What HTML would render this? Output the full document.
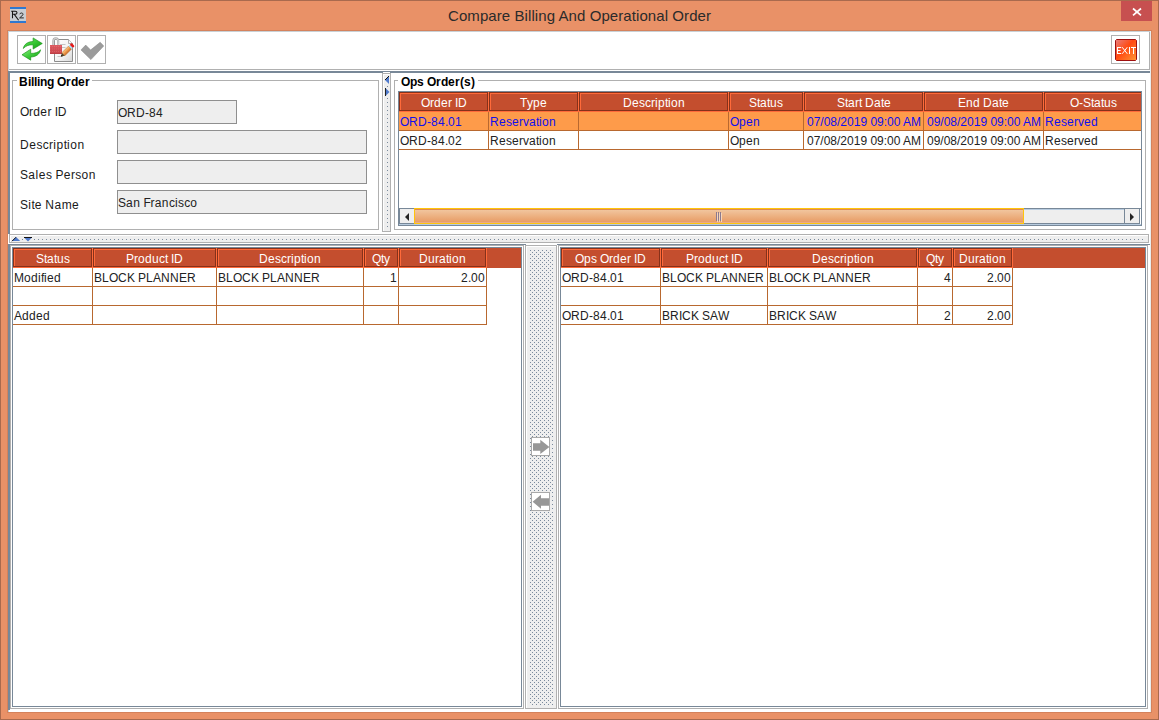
<!DOCTYPE html>
<html><head><meta charset="utf-8"><style>
html,body{margin:0;padding:0;width:1159px;height:720px;overflow:hidden;background:#E99167}
body>div{position:absolute}
.t{position:absolute;white-space:nowrap;font-family:"Liberation Sans",sans-serif}
.t i{display:inline-block;font-style:normal}
svg{position:absolute}
</style></head><body>
<div style="left:0px;top:0px;width:1159px;height:720px;background:#E99167;"></div>
<div style="left:0px;top:0px;width:1px;height:720px;background:#A96A4E;"></div>
<div style="left:1158px;top:0px;width:1px;height:720px;background:#A96A4E;"></div>
<div style="left:0px;top:0px;width:1159px;height:1px;background:#A96A4E;"></div>
<div style="left:0px;top:719px;width:1159px;height:1px;background:#A96A4E;"></div>
<div class="t " style="left:448px;top:7px;font-size:15px;line-height:17px;color:#2b2b2b;font-weight:normal;letter-spacing:0.08px">Compare Billing And Operational Order</div>
<svg style="left:10px;top:7px" width="16" height="16" viewBox="0 0 16 16"><rect x="0" y="0" width="16" height="16" fill="#C9CDD2"/><rect x="0" y="0" width="16" height="2" fill="#2F78D0"/><rect x="0" y="14" width="16" height="2" fill="#2F78D0"/><path d="M2.5 4V11.3M1.2 4.3H5.2C6.4 4.3 7 5 7 5.8C7 6.7 6.3 7.3 5.2 7.3H2.5M4.3 7.4L8.6 13.2" fill="none" stroke="#151515" stroke-width="1.05"/><path d="M9.8 7.2C10 6.4 10.6 6 11.4 6C12.4 6 13 6.6 13 7.3C13 8.3 11.2 9.4 9.6 10.9H13.8" fill="none" stroke="#262626" stroke-width="1"/></svg>
<div style="left:1121px;top:1px;width:31px;height:20px;background:#C75050;"></div>
<svg style="position:absolute;left:1132px;top:7px" width="10" height="10" viewBox="0 0 10 10"><path d="M1 1.5L9 8.3M9 1.5L1 8.3" stroke="#fff" stroke-width="1.7"/></svg>
<div style="left:7px;top:30px;width:1145px;height:683px;background:#D4825C;"></div>
<div style="left:8px;top:31px;width:1143px;height:681px;background:#fff;"></div>
<div style="left:8px;top:31px;width:1px;height:681px;background:#C9D1D6;"></div>
<div style="left:8px;top:31px;width:1143px;height:1px;background:#C9D1D6;"></div>
<div style="left:1150px;top:31px;width:1px;height:681px;background:#E8ECEE;"></div>
<div style="left:1149px;top:32px;width:1px;height:38px;background:#B0B0B0;"></div>
<div style="left:9px;top:69px;width:1141px;height:1px;background:#B0B0B0;"></div>
<div style="left:17px;top:35px;width:29px;height:29px;background:#fff;"></div>
<div style="left:17px;top:35px;width:29px;height:1px;background:#B0B0B0;"></div>
<div style="left:17px;top:63px;width:29px;height:1px;background:#B0B0B0;"></div>
<div style="left:17px;top:35px;width:1px;height:29px;background:#B0B0B0;"></div>
<div style="left:45px;top:35px;width:1px;height:29px;background:#B0B0B0;"></div>
<div style="left:47px;top:35px;width:29px;height:29px;background:#fff;"></div>
<div style="left:47px;top:35px;width:29px;height:1px;background:#B0B0B0;"></div>
<div style="left:47px;top:63px;width:29px;height:1px;background:#B0B0B0;"></div>
<div style="left:47px;top:35px;width:1px;height:29px;background:#B0B0B0;"></div>
<div style="left:75px;top:35px;width:1px;height:29px;background:#B0B0B0;"></div>
<div style="left:77px;top:35px;width:29px;height:29px;background:#fff;"></div>
<div style="left:77px;top:35px;width:29px;height:1px;background:#B0B0B0;"></div>
<div style="left:77px;top:63px;width:29px;height:1px;background:#B0B0B0;"></div>
<div style="left:77px;top:35px;width:1px;height:29px;background:#B0B0B0;"></div>
<div style="left:105px;top:35px;width:1px;height:29px;background:#B0B0B0;"></div>
<div style="left:1111px;top:35px;width:29px;height:29px;background:#fff;"></div>
<div style="left:1111px;top:35px;width:29px;height:1px;background:#B0B0B0;"></div>
<div style="left:1111px;top:63px;width:29px;height:1px;background:#B0B0B0;"></div>
<div style="left:1111px;top:35px;width:1px;height:29px;background:#B0B0B0;"></div>
<div style="left:1139px;top:35px;width:1px;height:29px;background:#B0B0B0;"></div>
<div style="left:8px;top:71px;width:1142px;height:2px;background:#788898;"></div>
<div style="left:8px;top:71px;width:2px;height:163px;background:#788898;"></div>
<div style="left:12px;top:80px;width:367px;height:1px;background:#B0B0B0;"></div>
<div style="left:12px;top:229px;width:367px;height:1px;background:#B0B0B0;"></div>
<div style="left:12px;top:80px;width:1px;height:150px;background:#B0B0B0;"></div>
<div style="left:378px;top:80px;width:1px;height:150px;background:#B0B0B0;"></div>
<div style="left:17px;top:76px;width:75px;height:9px;background:#fff;"></div>
<div class="t " style="left:19px;top:75px;font-size:12px;line-height:14px;color:#000;font-weight:bold;"><i style="width:9px">B</i><i style="width:3px">i</i><i style="width:3px">l</i><i style="width:3px">l</i><i style="width:3px">i</i><i style="width:7px">n</i><i style="width:7px">g</i><i style="width:3px">&nbsp;</i><i style="width:9px">O</i><i style="width:5px">r</i><i style="width:7px">d</i><i style="width:7px">e</i><i style="width:5px">r</i></div>
<div class="t " style="left:20px;top:105px;font-size:12px;line-height:14px;color:#000;font-weight:normal;color:#1a1a1a"><i style="width:9.12px">O</i><i style="width:4.12px">r</i><i style="width:7.12px">d</i><i style="width:7.12px">e</i><i style="width:4.12px">r</i><i style="width:3.12px">&nbsp;</i><i style="width:3.12px">I</i><i style="width:9.12px">D</i></div>
<div class="t " style="left:20px;top:138px;font-size:12px;line-height:14px;color:#000;font-weight:normal;color:#1a1a1a"><i style="width:9.26px">D</i><i style="width:7.26px">e</i><i style="width:6.26px">s</i><i style="width:6.26px">c</i><i style="width:4.26px">r</i><i style="width:3.26px">i</i><i style="width:7.26px">p</i><i style="width:3.26px">t</i><i style="width:3.26px">i</i><i style="width:7.26px">o</i><i style="width:7.26px">n</i></div>
<div class="t " style="left:20px;top:168px;font-size:12px;line-height:14px;color:#000;font-weight:normal;color:#1a1a1a"><i style="width:8.26px">S</i><i style="width:7.26px">a</i><i style="width:3.26px">l</i><i style="width:7.26px">e</i><i style="width:6.26px">s</i><i style="width:3.26px">&nbsp;</i><i style="width:8.26px">P</i><i style="width:7.26px">e</i><i style="width:4.26px">r</i><i style="width:6.26px">s</i><i style="width:7.26px">o</i><i style="width:7.26px">n</i></div>
<div class="t " style="left:20px;top:198px;font-size:12px;line-height:14px;color:#000;font-weight:normal;color:#1a1a1a"><i style="width:8.26px">S</i><i style="width:3.26px">i</i><i style="width:3.26px">t</i><i style="width:7.26px">e</i><i style="width:3.26px">&nbsp;</i><i style="width:9.26px">N</i><i style="width:7.26px">a</i><i style="width:10.26px">m</i><i style="width:7.26px">e</i></div>
<div style="left:117px;top:100px;width:120px;height:24px;background:#EEEEEE;"></div>
<div style="left:117px;top:100px;width:120px;height:1px;background:#8F8F8F;"></div>
<div style="left:117px;top:123px;width:120px;height:1px;background:#8F8F8F;"></div>
<div style="left:117px;top:100px;width:1px;height:24px;background:#8F8F8F;"></div>
<div style="left:236px;top:100px;width:1px;height:24px;background:#8F8F8F;"></div>
<div style="left:117px;top:130px;width:250px;height:24px;background:#EEEEEE;"></div>
<div style="left:117px;top:130px;width:250px;height:1px;background:#8F8F8F;"></div>
<div style="left:117px;top:153px;width:250px;height:1px;background:#8F8F8F;"></div>
<div style="left:117px;top:130px;width:1px;height:24px;background:#8F8F8F;"></div>
<div style="left:366px;top:130px;width:1px;height:24px;background:#8F8F8F;"></div>
<div style="left:117px;top:160px;width:250px;height:24px;background:#EEEEEE;"></div>
<div style="left:117px;top:160px;width:250px;height:1px;background:#8F8F8F;"></div>
<div style="left:117px;top:183px;width:250px;height:1px;background:#8F8F8F;"></div>
<div style="left:117px;top:160px;width:1px;height:24px;background:#8F8F8F;"></div>
<div style="left:366px;top:160px;width:1px;height:24px;background:#8F8F8F;"></div>
<div style="left:117px;top:190px;width:250px;height:24px;background:#EEEEEE;"></div>
<div style="left:117px;top:190px;width:250px;height:1px;background:#8F8F8F;"></div>
<div style="left:117px;top:213px;width:250px;height:1px;background:#8F8F8F;"></div>
<div style="left:117px;top:190px;width:1px;height:24px;background:#8F8F8F;"></div>
<div style="left:366px;top:190px;width:1px;height:24px;background:#8F8F8F;"></div>
<div class="t " style="left:118px;top:106px;font-size:12px;line-height:14px;color:#222;font-weight:normal;"><i style="width:9px">O</i><i style="width:9px">R</i><i style="width:9px">D</i><i style="width:4px">-</i><i style="width:7px">8</i><i style="width:7px">4</i></div>
<div class="t " style="left:118px;top:196px;font-size:12px;line-height:14px;color:#222;font-weight:normal;"><i style="width:8.12px">S</i><i style="width:7.12px">a</i><i style="width:7.12px">n</i><i style="width:3.12px">&nbsp;</i><i style="width:7.12px">F</i><i style="width:4.12px">r</i><i style="width:7.12px">a</i><i style="width:7.12px">n</i><i style="width:6.12px">c</i><i style="width:3.12px">i</i><i style="width:6.12px">s</i><i style="width:6.12px">c</i><i style="width:7.12px">o</i></div>
<div style="left:382px;top:73px;width:9px;height:159px;background:#EEEEEE;"></div>
<div style="left:382px;top:73px;width:9px;height:1px;background:#B0B0B0;"></div>
<div style="left:382px;top:231px;width:9px;height:1px;background:#B0B0B0;"></div>
<div style="left:382px;top:73px;width:1px;height:159px;background:#B0B0B0;"></div>
<div style="left:390px;top:73px;width:1px;height:159px;background:#B0B0B0;"></div>
<div style="left:383px;top:74px;width:7px;height:1px;background:#fff;"></div>
<div style="left:383px;top:74px;width:1px;height:157px;background:#fff;"></div>
<div style="left:383px;top:72px;width:7px;height:1px;background:#fff;"></div>
<div style="left:387px;top:86px;width:1px;height:1px;background:#7A8A9C;"></div>
<div style="left:387px;top:98px;width:1px;height:1px;background:#7A8A9C;"></div>
<div style="left:387px;top:102px;width:1px;height:1px;background:#7A8A9C;"></div>
<div style="left:387px;top:106px;width:1px;height:1px;background:#7A8A9C;"></div>
<div style="left:387px;top:110px;width:1px;height:1px;background:#7A8A9C;"></div>
<div style="left:387px;top:114px;width:1px;height:1px;background:#7A8A9C;"></div>
<div style="left:387px;top:118px;width:1px;height:1px;background:#7A8A9C;"></div>
<div style="left:387px;top:122px;width:1px;height:1px;background:#7A8A9C;"></div>
<div style="left:387px;top:126px;width:1px;height:1px;background:#7A8A9C;"></div>
<div style="left:387px;top:130px;width:1px;height:1px;background:#7A8A9C;"></div>
<div style="left:387px;top:134px;width:1px;height:1px;background:#7A8A9C;"></div>
<div style="left:387px;top:138px;width:1px;height:1px;background:#7A8A9C;"></div>
<div style="left:387px;top:142px;width:1px;height:1px;background:#7A8A9C;"></div>
<div style="left:387px;top:146px;width:1px;height:1px;background:#7A8A9C;"></div>
<div style="left:387px;top:150px;width:1px;height:1px;background:#7A8A9C;"></div>
<div style="left:387px;top:154px;width:1px;height:1px;background:#7A8A9C;"></div>
<div style="left:387px;top:158px;width:1px;height:1px;background:#7A8A9C;"></div>
<div style="left:387px;top:162px;width:1px;height:1px;background:#7A8A9C;"></div>
<div style="left:387px;top:166px;width:1px;height:1px;background:#7A8A9C;"></div>
<div style="left:387px;top:170px;width:1px;height:1px;background:#7A8A9C;"></div>
<div style="left:387px;top:174px;width:1px;height:1px;background:#7A8A9C;"></div>
<div style="left:387px;top:178px;width:1px;height:1px;background:#7A8A9C;"></div>
<div style="left:387px;top:182px;width:1px;height:1px;background:#7A8A9C;"></div>
<div style="left:387px;top:186px;width:1px;height:1px;background:#7A8A9C;"></div>
<div style="left:387px;top:190px;width:1px;height:1px;background:#7A8A9C;"></div>
<div style="left:387px;top:194px;width:1px;height:1px;background:#7A8A9C;"></div>
<div style="left:387px;top:198px;width:1px;height:1px;background:#7A8A9C;"></div>
<div style="left:387px;top:202px;width:1px;height:1px;background:#7A8A9C;"></div>
<div style="left:387px;top:206px;width:1px;height:1px;background:#7A8A9C;"></div>
<div style="left:387px;top:210px;width:1px;height:1px;background:#7A8A9C;"></div>
<div style="left:387px;top:214px;width:1px;height:1px;background:#7A8A9C;"></div>
<div style="left:387px;top:218px;width:1px;height:1px;background:#7A8A9C;"></div>
<div style="left:387px;top:222px;width:1px;height:1px;background:#7A8A9C;"></div>
<div style="left:387px;top:226px;width:1px;height:1px;background:#7A8A9C;"></div>
<svg style="position:absolute;left:384px;top:75px" width="7" height="24"><path d="M5 1L1 5L5 9Z" fill="#4F7ACC"/><path d="M5 1L1 5" stroke="#111" stroke-width="1"/><path d="M1.5 13L5.5 17L1.5 21Z" fill="#4F7ACC"/><path d="M1.5 13L1.5 21" stroke="#222" stroke-width="1"/></svg>
<div style="left:394px;top:80px;width:752px;height:1px;background:#B0B0B0;"></div>
<div style="left:394px;top:229px;width:752px;height:1px;background:#B0B0B0;"></div>
<div style="left:394px;top:80px;width:1px;height:150px;background:#B0B0B0;"></div>
<div style="left:1145px;top:80px;width:1px;height:150px;background:#B0B0B0;"></div>
<div style="left:398px;top:76px;width:80px;height:9px;background:#fff;"></div>
<div class="t " style="left:401px;top:75px;font-size:12px;line-height:14px;color:#000;font-weight:bold;"><i style="width:9px">O</i><i style="width:7px">p</i><i style="width:7px">s</i><i style="width:3px">&nbsp;</i><i style="width:9px">O</i><i style="width:5px">r</i><i style="width:7px">d</i><i style="width:7px">e</i><i style="width:5px">r</i><i style="width:4px">(</i><i style="width:7px">s</i><i style="width:4px">)</i></div>
<div style="left:398px;top:91px;width:744px;height:135px;background:#fff;"></div>
<div style="left:398px;top:91px;width:744px;height:1px;background:#788898;"></div>
<div style="left:398px;top:225px;width:744px;height:1px;background:#788898;"></div>
<div style="left:398px;top:91px;width:1px;height:135px;background:#788898;"></div>
<div style="left:1141px;top:91px;width:1px;height:135px;background:#788898;"></div>
<div style="left:399px;top:92px;width:742px;height:20px;background:#C44E2E;"></div>
<div style="left:488px;top:92px;width:1px;height:20px;background:#FF6A3A;"></div>
<div style="left:399px;top:92px;width:89px;height:1px;background:#86311A;"></div>
<div style="left:399px;top:110px;width:89px;height:1px;background:#86311A;"></div>
<div style="left:399px;top:92px;width:1px;height:19px;background:#86311A;"></div>
<div style="left:487px;top:92px;width:1px;height:19px;background:#86311A;"></div>
<div style="left:400px;top:93px;width:87px;height:1px;background:#FF6A3A;"></div>
<div style="left:400px;top:93px;width:1px;height:17px;background:#FF6A3A;"></div>
<div class="t" style="left:421px;top:96px;font-size:12px;line-height:14px;color:#fff;font-weight:normal;"><i style="width:9px">O</i><i style="width:4px">r</i><i style="width:7px">d</i><i style="width:7px">e</i><i style="width:4px">r</i><i style="width:3px">&nbsp;</i><i style="width:3px">I</i><i style="width:9px">D</i></div>
<div style="left:578px;top:92px;width:1px;height:20px;background:#FF6A3A;"></div>
<div style="left:489px;top:92px;width:89px;height:1px;background:#86311A;"></div>
<div style="left:489px;top:110px;width:89px;height:1px;background:#86311A;"></div>
<div style="left:489px;top:92px;width:1px;height:19px;background:#86311A;"></div>
<div style="left:577px;top:92px;width:1px;height:19px;background:#86311A;"></div>
<div style="left:490px;top:93px;width:87px;height:1px;background:#FF6A3A;"></div>
<div style="left:490px;top:93px;width:1px;height:17px;background:#FF6A3A;"></div>
<div class="t" style="left:520px;top:96px;font-size:12px;line-height:14px;color:#fff;font-weight:normal;"><i style="width:7px">T</i><i style="width:6px">y</i><i style="width:7px">p</i><i style="width:7px">e</i></div>
<div style="left:728px;top:92px;width:1px;height:20px;background:#FF6A3A;"></div>
<div style="left:579px;top:92px;width:149px;height:1px;background:#86311A;"></div>
<div style="left:579px;top:110px;width:149px;height:1px;background:#86311A;"></div>
<div style="left:579px;top:92px;width:1px;height:19px;background:#86311A;"></div>
<div style="left:727px;top:92px;width:1px;height:19px;background:#86311A;"></div>
<div style="left:580px;top:93px;width:147px;height:1px;background:#FF6A3A;"></div>
<div style="left:580px;top:93px;width:1px;height:17px;background:#FF6A3A;"></div>
<div class="t" style="left:623px;top:96px;font-size:12px;line-height:14px;color:#fff;font-weight:normal;"><i style="width:9px">D</i><i style="width:7px">e</i><i style="width:6px">s</i><i style="width:6px">c</i><i style="width:4px">r</i><i style="width:3px">i</i><i style="width:7px">p</i><i style="width:3px">t</i><i style="width:3px">i</i><i style="width:7px">o</i><i style="width:7px">n</i></div>
<div style="left:803px;top:92px;width:1px;height:20px;background:#FF6A3A;"></div>
<div style="left:729px;top:92px;width:74px;height:1px;background:#86311A;"></div>
<div style="left:729px;top:110px;width:74px;height:1px;background:#86311A;"></div>
<div style="left:729px;top:92px;width:1px;height:19px;background:#86311A;"></div>
<div style="left:802px;top:92px;width:1px;height:19px;background:#86311A;"></div>
<div style="left:730px;top:93px;width:72px;height:1px;background:#FF6A3A;"></div>
<div style="left:730px;top:93px;width:1px;height:17px;background:#FF6A3A;"></div>
<div class="t" style="left:749px;top:96px;font-size:12px;line-height:14px;color:#fff;font-weight:normal;"><i style="width:8px">S</i><i style="width:3px">t</i><i style="width:7px">a</i><i style="width:3px">t</i><i style="width:7px">u</i><i style="width:6px">s</i></div>
<div style="left:923px;top:92px;width:1px;height:20px;background:#FF6A3A;"></div>
<div style="left:804px;top:92px;width:119px;height:1px;background:#86311A;"></div>
<div style="left:804px;top:110px;width:119px;height:1px;background:#86311A;"></div>
<div style="left:804px;top:92px;width:1px;height:19px;background:#86311A;"></div>
<div style="left:922px;top:92px;width:1px;height:19px;background:#86311A;"></div>
<div style="left:805px;top:93px;width:117px;height:1px;background:#FF6A3A;"></div>
<div style="left:805px;top:93px;width:1px;height:17px;background:#FF6A3A;"></div>
<div class="t" style="left:837px;top:96px;font-size:12px;line-height:14px;color:#fff;font-weight:normal;"><i style="width:8px">S</i><i style="width:3px">t</i><i style="width:7px">a</i><i style="width:4px">r</i><i style="width:3px">t</i><i style="width:3px">&nbsp;</i><i style="width:9px">D</i><i style="width:7px">a</i><i style="width:3px">t</i><i style="width:7px">e</i></div>
<div style="left:1043px;top:92px;width:1px;height:20px;background:#FF6A3A;"></div>
<div style="left:924px;top:92px;width:119px;height:1px;background:#86311A;"></div>
<div style="left:924px;top:110px;width:119px;height:1px;background:#86311A;"></div>
<div style="left:924px;top:92px;width:1px;height:19px;background:#86311A;"></div>
<div style="left:1042px;top:92px;width:1px;height:19px;background:#86311A;"></div>
<div style="left:925px;top:93px;width:117px;height:1px;background:#FF6A3A;"></div>
<div style="left:925px;top:93px;width:1px;height:17px;background:#FF6A3A;"></div>
<div class="t" style="left:958px;top:96px;font-size:12px;line-height:14px;color:#fff;font-weight:normal;"><i style="width:8px">E</i><i style="width:7px">n</i><i style="width:7px">d</i><i style="width:3px">&nbsp;</i><i style="width:9px">D</i><i style="width:7px">a</i><i style="width:3px">t</i><i style="width:7px">e</i></div>
<div style="left:399px;top:111px;width:645px;height:1px;background:#FF6A3A;"></div>
<div style="left:1044px;top:92px;width:97px;height:20px;background:#C44E2E;"></div>
<div style="left:1044px;top:92px;width:97px;height:1px;background:#86311A;"></div>
<div style="left:1044px;top:110px;width:97px;height:1px;background:#86311A;"></div>
<div style="left:1044px;top:92px;width:1px;height:19px;background:#86311A;"></div>
<div style="left:1045px;top:93px;width:96px;height:1px;background:#FF6A3A;"></div>
<div style="left:1045px;top:93px;width:1px;height:17px;background:#FF6A3A;"></div>
<div style="left:1044px;top:111px;width:97px;height:1px;background:#FF6A3A;"></div>
<div class="t" style="left:1070px;top:96px;font-size:12px;line-height:14px;color:#fff;font-weight:normal;"><i style="width:9px">O</i><i style="width:4px">-</i><i style="width:8px">S</i><i style="width:3px">t</i><i style="width:7px">a</i><i style="width:3px">t</i><i style="width:7px">u</i><i style="width:6px">s</i></div>
<div style="left:399px;top:112px;width:742px;height:18px;background:#FE9B4A;"></div>
<div style="left:399px;top:130px;width:742px;height:1px;background:#B8682F;"></div>
<div style="left:399px;top:149px;width:742px;height:1px;background:#B8682F;"></div>
<div style="left:488px;top:112px;width:1px;height:38px;background:#B8682F;"></div>
<div style="left:578px;top:112px;width:1px;height:38px;background:#B8682F;"></div>
<div style="left:728px;top:112px;width:1px;height:38px;background:#B8682F;"></div>
<div style="left:803px;top:112px;width:1px;height:38px;background:#B8682F;"></div>
<div style="left:923px;top:112px;width:1px;height:38px;background:#B8682F;"></div>
<div style="left:1043px;top:112px;width:1px;height:38px;background:#B8682F;"></div>
<div class="t " style="left:400px;top:115px;font-size:12px;line-height:14px;color:#1010EE;font-weight:normal;"><i style="width:9px">O</i><i style="width:9px">R</i><i style="width:9px">D</i><i style="width:4px">-</i><i style="width:7px">8</i><i style="width:7px">4</i><i style="width:3px">.</i><i style="width:7px">0</i><i style="width:7px">1</i></div>
<div class="t " style="left:490px;top:115px;font-size:12px;line-height:14px;color:#1010EE;font-weight:normal;"><i style="width:9px">R</i><i style="width:7px">e</i><i style="width:6px">s</i><i style="width:7px">e</i><i style="width:4px">r</i><i style="width:6px">v</i><i style="width:7px">a</i><i style="width:3px">t</i><i style="width:3px">i</i><i style="width:7px">o</i><i style="width:7px">n</i></div>
<div class="t " style="left:730px;top:115px;font-size:12px;line-height:14px;color:#1010EE;font-weight:normal;"><i style="width:9px">O</i><i style="width:7px">p</i><i style="width:7px">e</i><i style="width:7px">n</i></div>
<div class="t " style="left:807px;top:115px;font-size:12px;line-height:14px;color:#1010EE;font-weight:normal;">07/08/2019 09:00 AM</div>
<div class="t " style="left:927px;top:115px;font-size:12px;line-height:14px;color:#1010EE;font-weight:normal;">09/08/2019 09:00 AM</div>
<div class="t " style="left:1045px;top:115px;font-size:12px;line-height:14px;color:#1010EE;font-weight:normal;"><i style="width:9px">R</i><i style="width:7px">e</i><i style="width:6px">s</i><i style="width:7px">e</i><i style="width:4px">r</i><i style="width:6px">v</i><i style="width:7px">e</i><i style="width:7px">d</i></div>
<div class="t " style="left:400px;top:134px;font-size:12px;line-height:14px;color:#222;font-weight:normal;"><i style="width:9px">O</i><i style="width:9px">R</i><i style="width:9px">D</i><i style="width:4px">-</i><i style="width:7px">8</i><i style="width:7px">4</i><i style="width:3px">.</i><i style="width:7px">0</i><i style="width:7px">2</i></div>
<div class="t " style="left:490px;top:134px;font-size:12px;line-height:14px;color:#222;font-weight:normal;"><i style="width:9px">R</i><i style="width:7px">e</i><i style="width:6px">s</i><i style="width:7px">e</i><i style="width:4px">r</i><i style="width:6px">v</i><i style="width:7px">a</i><i style="width:3px">t</i><i style="width:3px">i</i><i style="width:7px">o</i><i style="width:7px">n</i></div>
<div class="t " style="left:730px;top:134px;font-size:12px;line-height:14px;color:#222;font-weight:normal;"><i style="width:9px">O</i><i style="width:7px">p</i><i style="width:7px">e</i><i style="width:7px">n</i></div>
<div class="t " style="left:807px;top:134px;font-size:12px;line-height:14px;color:#222;font-weight:normal;">07/08/2019 09:00 AM</div>
<div class="t " style="left:927px;top:134px;font-size:12px;line-height:14px;color:#222;font-weight:normal;">09/08/2019 09:00 AM</div>
<div class="t " style="left:1045px;top:134px;font-size:12px;line-height:14px;color:#222;font-weight:normal;"><i style="width:9px">R</i><i style="width:7px">e</i><i style="width:6px">s</i><i style="width:7px">e</i><i style="width:4px">r</i><i style="width:6px">v</i><i style="width:7px">e</i><i style="width:7px">d</i></div>
<div style="left:399px;top:208px;width:742px;height:1px;background:#788898;"></div>
<div style="left:399px;top:224px;width:742px;height:1px;background:#B8CCE0;"></div>
<div style="left:398px;top:225px;width:744px;height:1px;background:#788898;"></div>
<div style="left:399px;top:209px;width:15px;height:14px;background:#EEEEEE;"></div>
<div style="left:399px;top:208px;width:1px;height:16px;background:#788898;"></div>
<div style="left:399px;top:223px;width:15px;height:1px;background:#788898;"></div>
<svg style="position:absolute;left:404px;top:212px" width="6" height="10"><path d="M5 1L1 5L5 9Z" fill="#222"/></svg>
<div style="left:414px;top:208px;width:610px;height:16px;background:#FFC40A;"></div>
<div style="left:415px;top:209px;width:608px;height:1px;background:#E0894F;"></div>
<div style="left:415px;top:210px;width:608px;height:12px;background:linear-gradient(180deg,#F1C59E,#E89D66)"></div>
<div style="left:415px;top:222px;width:608px;height:1px;background:#EBAB86;"></div>
<div style="left:716px;top:212px;width:1px;height:9px;background:#8C7A8E;"></div>
<div style="left:717px;top:213px;width:1px;height:9px;background:#F8D6B8;"></div>
<div style="left:718px;top:212px;width:1px;height:9px;background:#8C7A8E;"></div>
<div style="left:719px;top:213px;width:1px;height:9px;background:#F8D6B8;"></div>
<div style="left:720px;top:212px;width:1px;height:9px;background:#8C7A8E;"></div>
<div style="left:721px;top:213px;width:1px;height:9px;background:#F8D6B8;"></div>
<div style="left:1024px;top:209px;width:100px;height:14px;background:#EEEEEE;"></div>
<div style="left:1024px;top:209px;width:100px;height:1px;background:#B8CCE0;"></div>
<div style="left:1024px;top:223px;width:100px;height:1px;background:#788898;"></div>
<div style="left:1124px;top:209px;width:16px;height:14px;background:#EEEEEE;"></div>
<div style="left:1124px;top:209px;width:1px;height:15px;background:#788898;"></div>
<div style="left:1124px;top:223px;width:16px;height:1px;background:#788898;"></div>
<div style="left:1139px;top:209px;width:1px;height:15px;background:#788898;"></div>
<svg style="position:absolute;left:1129px;top:212px" width="6" height="10"><path d="M1 1L5 5L1 9Z" fill="#222"/></svg>
<div style="left:9px;top:234px;width:1140px;height:9px;background:#EEEEEE;"></div>
<div style="left:9px;top:234px;width:1140px;height:1px;background:#B0B0B0;"></div>
<div style="left:9px;top:242px;width:1140px;height:1px;background:#B0B0B0;"></div>
<div style="left:9px;top:234px;width:1px;height:9px;background:#B0B0B0;"></div>
<div style="left:1148px;top:234px;width:1px;height:9px;background:#B0B0B0;"></div>
<div style="left:10px;top:235px;width:1138px;height:1px;background:#fff;"></div>
<div style="left:10px;top:235px;width:1px;height:7px;background:#fff;"></div>
<div style="left:34px;top:239px;width:1px;height:1px;background:#7A8A9C;"></div>
<div style="left:38px;top:239px;width:1px;height:1px;background:#7A8A9C;"></div>
<div style="left:42px;top:239px;width:1px;height:1px;background:#7A8A9C;"></div>
<div style="left:46px;top:239px;width:1px;height:1px;background:#7A8A9C;"></div>
<div style="left:50px;top:239px;width:1px;height:1px;background:#7A8A9C;"></div>
<div style="left:54px;top:239px;width:1px;height:1px;background:#7A8A9C;"></div>
<div style="left:58px;top:239px;width:1px;height:1px;background:#7A8A9C;"></div>
<div style="left:62px;top:239px;width:1px;height:1px;background:#7A8A9C;"></div>
<div style="left:66px;top:239px;width:1px;height:1px;background:#7A8A9C;"></div>
<div style="left:70px;top:239px;width:1px;height:1px;background:#7A8A9C;"></div>
<div style="left:74px;top:239px;width:1px;height:1px;background:#7A8A9C;"></div>
<div style="left:78px;top:239px;width:1px;height:1px;background:#7A8A9C;"></div>
<div style="left:82px;top:239px;width:1px;height:1px;background:#7A8A9C;"></div>
<div style="left:86px;top:239px;width:1px;height:1px;background:#7A8A9C;"></div>
<div style="left:90px;top:239px;width:1px;height:1px;background:#7A8A9C;"></div>
<div style="left:94px;top:239px;width:1px;height:1px;background:#7A8A9C;"></div>
<div style="left:98px;top:239px;width:1px;height:1px;background:#7A8A9C;"></div>
<div style="left:102px;top:239px;width:1px;height:1px;background:#7A8A9C;"></div>
<div style="left:106px;top:239px;width:1px;height:1px;background:#7A8A9C;"></div>
<div style="left:110px;top:239px;width:1px;height:1px;background:#7A8A9C;"></div>
<div style="left:114px;top:239px;width:1px;height:1px;background:#7A8A9C;"></div>
<div style="left:118px;top:239px;width:1px;height:1px;background:#7A8A9C;"></div>
<div style="left:122px;top:239px;width:1px;height:1px;background:#7A8A9C;"></div>
<div style="left:126px;top:239px;width:1px;height:1px;background:#7A8A9C;"></div>
<div style="left:130px;top:239px;width:1px;height:1px;background:#7A8A9C;"></div>
<div style="left:134px;top:239px;width:1px;height:1px;background:#7A8A9C;"></div>
<div style="left:138px;top:239px;width:1px;height:1px;background:#7A8A9C;"></div>
<div style="left:142px;top:239px;width:1px;height:1px;background:#7A8A9C;"></div>
<div style="left:146px;top:239px;width:1px;height:1px;background:#7A8A9C;"></div>
<div style="left:150px;top:239px;width:1px;height:1px;background:#7A8A9C;"></div>
<div style="left:154px;top:239px;width:1px;height:1px;background:#7A8A9C;"></div>
<div style="left:158px;top:239px;width:1px;height:1px;background:#7A8A9C;"></div>
<div style="left:162px;top:239px;width:1px;height:1px;background:#7A8A9C;"></div>
<div style="left:166px;top:239px;width:1px;height:1px;background:#7A8A9C;"></div>
<div style="left:170px;top:239px;width:1px;height:1px;background:#7A8A9C;"></div>
<div style="left:174px;top:239px;width:1px;height:1px;background:#7A8A9C;"></div>
<div style="left:178px;top:239px;width:1px;height:1px;background:#7A8A9C;"></div>
<div style="left:182px;top:239px;width:1px;height:1px;background:#7A8A9C;"></div>
<div style="left:186px;top:239px;width:1px;height:1px;background:#7A8A9C;"></div>
<div style="left:190px;top:239px;width:1px;height:1px;background:#7A8A9C;"></div>
<div style="left:194px;top:239px;width:1px;height:1px;background:#7A8A9C;"></div>
<div style="left:198px;top:239px;width:1px;height:1px;background:#7A8A9C;"></div>
<div style="left:202px;top:239px;width:1px;height:1px;background:#7A8A9C;"></div>
<div style="left:206px;top:239px;width:1px;height:1px;background:#7A8A9C;"></div>
<div style="left:210px;top:239px;width:1px;height:1px;background:#7A8A9C;"></div>
<div style="left:214px;top:239px;width:1px;height:1px;background:#7A8A9C;"></div>
<div style="left:218px;top:239px;width:1px;height:1px;background:#7A8A9C;"></div>
<div style="left:222px;top:239px;width:1px;height:1px;background:#7A8A9C;"></div>
<div style="left:226px;top:239px;width:1px;height:1px;background:#7A8A9C;"></div>
<div style="left:230px;top:239px;width:1px;height:1px;background:#7A8A9C;"></div>
<div style="left:234px;top:239px;width:1px;height:1px;background:#7A8A9C;"></div>
<div style="left:238px;top:239px;width:1px;height:1px;background:#7A8A9C;"></div>
<div style="left:242px;top:239px;width:1px;height:1px;background:#7A8A9C;"></div>
<div style="left:246px;top:239px;width:1px;height:1px;background:#7A8A9C;"></div>
<div style="left:250px;top:239px;width:1px;height:1px;background:#7A8A9C;"></div>
<div style="left:254px;top:239px;width:1px;height:1px;background:#7A8A9C;"></div>
<div style="left:258px;top:239px;width:1px;height:1px;background:#7A8A9C;"></div>
<div style="left:262px;top:239px;width:1px;height:1px;background:#7A8A9C;"></div>
<div style="left:266px;top:239px;width:1px;height:1px;background:#7A8A9C;"></div>
<div style="left:270px;top:239px;width:1px;height:1px;background:#7A8A9C;"></div>
<div style="left:274px;top:239px;width:1px;height:1px;background:#7A8A9C;"></div>
<div style="left:278px;top:239px;width:1px;height:1px;background:#7A8A9C;"></div>
<div style="left:282px;top:239px;width:1px;height:1px;background:#7A8A9C;"></div>
<div style="left:286px;top:239px;width:1px;height:1px;background:#7A8A9C;"></div>
<div style="left:290px;top:239px;width:1px;height:1px;background:#7A8A9C;"></div>
<div style="left:294px;top:239px;width:1px;height:1px;background:#7A8A9C;"></div>
<div style="left:298px;top:239px;width:1px;height:1px;background:#7A8A9C;"></div>
<div style="left:302px;top:239px;width:1px;height:1px;background:#7A8A9C;"></div>
<div style="left:306px;top:239px;width:1px;height:1px;background:#7A8A9C;"></div>
<div style="left:310px;top:239px;width:1px;height:1px;background:#7A8A9C;"></div>
<div style="left:314px;top:239px;width:1px;height:1px;background:#7A8A9C;"></div>
<div style="left:318px;top:239px;width:1px;height:1px;background:#7A8A9C;"></div>
<div style="left:322px;top:239px;width:1px;height:1px;background:#7A8A9C;"></div>
<div style="left:326px;top:239px;width:1px;height:1px;background:#7A8A9C;"></div>
<div style="left:330px;top:239px;width:1px;height:1px;background:#7A8A9C;"></div>
<div style="left:334px;top:239px;width:1px;height:1px;background:#7A8A9C;"></div>
<div style="left:338px;top:239px;width:1px;height:1px;background:#7A8A9C;"></div>
<div style="left:342px;top:239px;width:1px;height:1px;background:#7A8A9C;"></div>
<div style="left:346px;top:239px;width:1px;height:1px;background:#7A8A9C;"></div>
<div style="left:350px;top:239px;width:1px;height:1px;background:#7A8A9C;"></div>
<div style="left:354px;top:239px;width:1px;height:1px;background:#7A8A9C;"></div>
<div style="left:358px;top:239px;width:1px;height:1px;background:#7A8A9C;"></div>
<div style="left:362px;top:239px;width:1px;height:1px;background:#7A8A9C;"></div>
<div style="left:366px;top:239px;width:1px;height:1px;background:#7A8A9C;"></div>
<div style="left:370px;top:239px;width:1px;height:1px;background:#7A8A9C;"></div>
<div style="left:374px;top:239px;width:1px;height:1px;background:#7A8A9C;"></div>
<div style="left:378px;top:239px;width:1px;height:1px;background:#7A8A9C;"></div>
<div style="left:382px;top:239px;width:1px;height:1px;background:#7A8A9C;"></div>
<div style="left:386px;top:239px;width:1px;height:1px;background:#7A8A9C;"></div>
<div style="left:390px;top:239px;width:1px;height:1px;background:#7A8A9C;"></div>
<div style="left:394px;top:239px;width:1px;height:1px;background:#7A8A9C;"></div>
<div style="left:398px;top:239px;width:1px;height:1px;background:#7A8A9C;"></div>
<div style="left:402px;top:239px;width:1px;height:1px;background:#7A8A9C;"></div>
<div style="left:406px;top:239px;width:1px;height:1px;background:#7A8A9C;"></div>
<div style="left:410px;top:239px;width:1px;height:1px;background:#7A8A9C;"></div>
<div style="left:414px;top:239px;width:1px;height:1px;background:#7A8A9C;"></div>
<div style="left:418px;top:239px;width:1px;height:1px;background:#7A8A9C;"></div>
<div style="left:422px;top:239px;width:1px;height:1px;background:#7A8A9C;"></div>
<div style="left:426px;top:239px;width:1px;height:1px;background:#7A8A9C;"></div>
<div style="left:430px;top:239px;width:1px;height:1px;background:#7A8A9C;"></div>
<div style="left:434px;top:239px;width:1px;height:1px;background:#7A8A9C;"></div>
<div style="left:438px;top:239px;width:1px;height:1px;background:#7A8A9C;"></div>
<div style="left:442px;top:239px;width:1px;height:1px;background:#7A8A9C;"></div>
<div style="left:446px;top:239px;width:1px;height:1px;background:#7A8A9C;"></div>
<div style="left:450px;top:239px;width:1px;height:1px;background:#7A8A9C;"></div>
<div style="left:454px;top:239px;width:1px;height:1px;background:#7A8A9C;"></div>
<div style="left:458px;top:239px;width:1px;height:1px;background:#7A8A9C;"></div>
<div style="left:462px;top:239px;width:1px;height:1px;background:#7A8A9C;"></div>
<div style="left:466px;top:239px;width:1px;height:1px;background:#7A8A9C;"></div>
<div style="left:470px;top:239px;width:1px;height:1px;background:#7A8A9C;"></div>
<div style="left:474px;top:239px;width:1px;height:1px;background:#7A8A9C;"></div>
<div style="left:478px;top:239px;width:1px;height:1px;background:#7A8A9C;"></div>
<div style="left:482px;top:239px;width:1px;height:1px;background:#7A8A9C;"></div>
<div style="left:486px;top:239px;width:1px;height:1px;background:#7A8A9C;"></div>
<div style="left:490px;top:239px;width:1px;height:1px;background:#7A8A9C;"></div>
<div style="left:494px;top:239px;width:1px;height:1px;background:#7A8A9C;"></div>
<div style="left:498px;top:239px;width:1px;height:1px;background:#7A8A9C;"></div>
<div style="left:502px;top:239px;width:1px;height:1px;background:#7A8A9C;"></div>
<div style="left:506px;top:239px;width:1px;height:1px;background:#7A8A9C;"></div>
<div style="left:510px;top:239px;width:1px;height:1px;background:#7A8A9C;"></div>
<div style="left:514px;top:239px;width:1px;height:1px;background:#7A8A9C;"></div>
<div style="left:518px;top:239px;width:1px;height:1px;background:#7A8A9C;"></div>
<div style="left:522px;top:239px;width:1px;height:1px;background:#7A8A9C;"></div>
<div style="left:526px;top:239px;width:1px;height:1px;background:#7A8A9C;"></div>
<div style="left:530px;top:239px;width:1px;height:1px;background:#7A8A9C;"></div>
<div style="left:534px;top:239px;width:1px;height:1px;background:#7A8A9C;"></div>
<div style="left:538px;top:239px;width:1px;height:1px;background:#7A8A9C;"></div>
<div style="left:542px;top:239px;width:1px;height:1px;background:#7A8A9C;"></div>
<div style="left:546px;top:239px;width:1px;height:1px;background:#7A8A9C;"></div>
<div style="left:550px;top:239px;width:1px;height:1px;background:#7A8A9C;"></div>
<div style="left:554px;top:239px;width:1px;height:1px;background:#7A8A9C;"></div>
<div style="left:558px;top:239px;width:1px;height:1px;background:#7A8A9C;"></div>
<div style="left:562px;top:239px;width:1px;height:1px;background:#7A8A9C;"></div>
<div style="left:566px;top:239px;width:1px;height:1px;background:#7A8A9C;"></div>
<div style="left:570px;top:239px;width:1px;height:1px;background:#7A8A9C;"></div>
<div style="left:574px;top:239px;width:1px;height:1px;background:#7A8A9C;"></div>
<div style="left:578px;top:239px;width:1px;height:1px;background:#7A8A9C;"></div>
<div style="left:582px;top:239px;width:1px;height:1px;background:#7A8A9C;"></div>
<div style="left:586px;top:239px;width:1px;height:1px;background:#7A8A9C;"></div>
<div style="left:590px;top:239px;width:1px;height:1px;background:#7A8A9C;"></div>
<div style="left:594px;top:239px;width:1px;height:1px;background:#7A8A9C;"></div>
<div style="left:598px;top:239px;width:1px;height:1px;background:#7A8A9C;"></div>
<div style="left:602px;top:239px;width:1px;height:1px;background:#7A8A9C;"></div>
<div style="left:606px;top:239px;width:1px;height:1px;background:#7A8A9C;"></div>
<div style="left:610px;top:239px;width:1px;height:1px;background:#7A8A9C;"></div>
<div style="left:614px;top:239px;width:1px;height:1px;background:#7A8A9C;"></div>
<div style="left:618px;top:239px;width:1px;height:1px;background:#7A8A9C;"></div>
<div style="left:622px;top:239px;width:1px;height:1px;background:#7A8A9C;"></div>
<div style="left:626px;top:239px;width:1px;height:1px;background:#7A8A9C;"></div>
<div style="left:630px;top:239px;width:1px;height:1px;background:#7A8A9C;"></div>
<div style="left:634px;top:239px;width:1px;height:1px;background:#7A8A9C;"></div>
<div style="left:638px;top:239px;width:1px;height:1px;background:#7A8A9C;"></div>
<div style="left:642px;top:239px;width:1px;height:1px;background:#7A8A9C;"></div>
<div style="left:646px;top:239px;width:1px;height:1px;background:#7A8A9C;"></div>
<div style="left:650px;top:239px;width:1px;height:1px;background:#7A8A9C;"></div>
<div style="left:654px;top:239px;width:1px;height:1px;background:#7A8A9C;"></div>
<div style="left:658px;top:239px;width:1px;height:1px;background:#7A8A9C;"></div>
<div style="left:662px;top:239px;width:1px;height:1px;background:#7A8A9C;"></div>
<div style="left:666px;top:239px;width:1px;height:1px;background:#7A8A9C;"></div>
<div style="left:670px;top:239px;width:1px;height:1px;background:#7A8A9C;"></div>
<div style="left:674px;top:239px;width:1px;height:1px;background:#7A8A9C;"></div>
<div style="left:678px;top:239px;width:1px;height:1px;background:#7A8A9C;"></div>
<div style="left:682px;top:239px;width:1px;height:1px;background:#7A8A9C;"></div>
<div style="left:686px;top:239px;width:1px;height:1px;background:#7A8A9C;"></div>
<div style="left:690px;top:239px;width:1px;height:1px;background:#7A8A9C;"></div>
<div style="left:694px;top:239px;width:1px;height:1px;background:#7A8A9C;"></div>
<div style="left:698px;top:239px;width:1px;height:1px;background:#7A8A9C;"></div>
<div style="left:702px;top:239px;width:1px;height:1px;background:#7A8A9C;"></div>
<div style="left:706px;top:239px;width:1px;height:1px;background:#7A8A9C;"></div>
<div style="left:710px;top:239px;width:1px;height:1px;background:#7A8A9C;"></div>
<div style="left:714px;top:239px;width:1px;height:1px;background:#7A8A9C;"></div>
<div style="left:718px;top:239px;width:1px;height:1px;background:#7A8A9C;"></div>
<div style="left:722px;top:239px;width:1px;height:1px;background:#7A8A9C;"></div>
<div style="left:726px;top:239px;width:1px;height:1px;background:#7A8A9C;"></div>
<div style="left:730px;top:239px;width:1px;height:1px;background:#7A8A9C;"></div>
<div style="left:734px;top:239px;width:1px;height:1px;background:#7A8A9C;"></div>
<div style="left:738px;top:239px;width:1px;height:1px;background:#7A8A9C;"></div>
<div style="left:742px;top:239px;width:1px;height:1px;background:#7A8A9C;"></div>
<div style="left:746px;top:239px;width:1px;height:1px;background:#7A8A9C;"></div>
<div style="left:750px;top:239px;width:1px;height:1px;background:#7A8A9C;"></div>
<div style="left:754px;top:239px;width:1px;height:1px;background:#7A8A9C;"></div>
<div style="left:758px;top:239px;width:1px;height:1px;background:#7A8A9C;"></div>
<div style="left:762px;top:239px;width:1px;height:1px;background:#7A8A9C;"></div>
<div style="left:766px;top:239px;width:1px;height:1px;background:#7A8A9C;"></div>
<div style="left:770px;top:239px;width:1px;height:1px;background:#7A8A9C;"></div>
<div style="left:774px;top:239px;width:1px;height:1px;background:#7A8A9C;"></div>
<div style="left:778px;top:239px;width:1px;height:1px;background:#7A8A9C;"></div>
<div style="left:782px;top:239px;width:1px;height:1px;background:#7A8A9C;"></div>
<div style="left:786px;top:239px;width:1px;height:1px;background:#7A8A9C;"></div>
<div style="left:790px;top:239px;width:1px;height:1px;background:#7A8A9C;"></div>
<div style="left:794px;top:239px;width:1px;height:1px;background:#7A8A9C;"></div>
<div style="left:798px;top:239px;width:1px;height:1px;background:#7A8A9C;"></div>
<div style="left:802px;top:239px;width:1px;height:1px;background:#7A8A9C;"></div>
<div style="left:806px;top:239px;width:1px;height:1px;background:#7A8A9C;"></div>
<div style="left:810px;top:239px;width:1px;height:1px;background:#7A8A9C;"></div>
<div style="left:814px;top:239px;width:1px;height:1px;background:#7A8A9C;"></div>
<div style="left:818px;top:239px;width:1px;height:1px;background:#7A8A9C;"></div>
<div style="left:822px;top:239px;width:1px;height:1px;background:#7A8A9C;"></div>
<div style="left:826px;top:239px;width:1px;height:1px;background:#7A8A9C;"></div>
<div style="left:830px;top:239px;width:1px;height:1px;background:#7A8A9C;"></div>
<div style="left:834px;top:239px;width:1px;height:1px;background:#7A8A9C;"></div>
<div style="left:838px;top:239px;width:1px;height:1px;background:#7A8A9C;"></div>
<div style="left:842px;top:239px;width:1px;height:1px;background:#7A8A9C;"></div>
<div style="left:846px;top:239px;width:1px;height:1px;background:#7A8A9C;"></div>
<div style="left:850px;top:239px;width:1px;height:1px;background:#7A8A9C;"></div>
<div style="left:854px;top:239px;width:1px;height:1px;background:#7A8A9C;"></div>
<div style="left:858px;top:239px;width:1px;height:1px;background:#7A8A9C;"></div>
<div style="left:862px;top:239px;width:1px;height:1px;background:#7A8A9C;"></div>
<div style="left:866px;top:239px;width:1px;height:1px;background:#7A8A9C;"></div>
<div style="left:870px;top:239px;width:1px;height:1px;background:#7A8A9C;"></div>
<div style="left:874px;top:239px;width:1px;height:1px;background:#7A8A9C;"></div>
<div style="left:878px;top:239px;width:1px;height:1px;background:#7A8A9C;"></div>
<div style="left:882px;top:239px;width:1px;height:1px;background:#7A8A9C;"></div>
<div style="left:886px;top:239px;width:1px;height:1px;background:#7A8A9C;"></div>
<div style="left:890px;top:239px;width:1px;height:1px;background:#7A8A9C;"></div>
<div style="left:894px;top:239px;width:1px;height:1px;background:#7A8A9C;"></div>
<div style="left:898px;top:239px;width:1px;height:1px;background:#7A8A9C;"></div>
<div style="left:902px;top:239px;width:1px;height:1px;background:#7A8A9C;"></div>
<div style="left:906px;top:239px;width:1px;height:1px;background:#7A8A9C;"></div>
<div style="left:910px;top:239px;width:1px;height:1px;background:#7A8A9C;"></div>
<div style="left:914px;top:239px;width:1px;height:1px;background:#7A8A9C;"></div>
<div style="left:918px;top:239px;width:1px;height:1px;background:#7A8A9C;"></div>
<div style="left:922px;top:239px;width:1px;height:1px;background:#7A8A9C;"></div>
<div style="left:926px;top:239px;width:1px;height:1px;background:#7A8A9C;"></div>
<div style="left:930px;top:239px;width:1px;height:1px;background:#7A8A9C;"></div>
<div style="left:934px;top:239px;width:1px;height:1px;background:#7A8A9C;"></div>
<div style="left:938px;top:239px;width:1px;height:1px;background:#7A8A9C;"></div>
<div style="left:942px;top:239px;width:1px;height:1px;background:#7A8A9C;"></div>
<div style="left:946px;top:239px;width:1px;height:1px;background:#7A8A9C;"></div>
<div style="left:950px;top:239px;width:1px;height:1px;background:#7A8A9C;"></div>
<div style="left:954px;top:239px;width:1px;height:1px;background:#7A8A9C;"></div>
<div style="left:958px;top:239px;width:1px;height:1px;background:#7A8A9C;"></div>
<div style="left:962px;top:239px;width:1px;height:1px;background:#7A8A9C;"></div>
<div style="left:966px;top:239px;width:1px;height:1px;background:#7A8A9C;"></div>
<div style="left:970px;top:239px;width:1px;height:1px;background:#7A8A9C;"></div>
<div style="left:974px;top:239px;width:1px;height:1px;background:#7A8A9C;"></div>
<div style="left:978px;top:239px;width:1px;height:1px;background:#7A8A9C;"></div>
<div style="left:982px;top:239px;width:1px;height:1px;background:#7A8A9C;"></div>
<div style="left:986px;top:239px;width:1px;height:1px;background:#7A8A9C;"></div>
<div style="left:990px;top:239px;width:1px;height:1px;background:#7A8A9C;"></div>
<div style="left:994px;top:239px;width:1px;height:1px;background:#7A8A9C;"></div>
<div style="left:998px;top:239px;width:1px;height:1px;background:#7A8A9C;"></div>
<div style="left:1002px;top:239px;width:1px;height:1px;background:#7A8A9C;"></div>
<div style="left:1006px;top:239px;width:1px;height:1px;background:#7A8A9C;"></div>
<div style="left:1010px;top:239px;width:1px;height:1px;background:#7A8A9C;"></div>
<div style="left:1014px;top:239px;width:1px;height:1px;background:#7A8A9C;"></div>
<div style="left:1018px;top:239px;width:1px;height:1px;background:#7A8A9C;"></div>
<div style="left:1022px;top:239px;width:1px;height:1px;background:#7A8A9C;"></div>
<div style="left:1026px;top:239px;width:1px;height:1px;background:#7A8A9C;"></div>
<div style="left:1030px;top:239px;width:1px;height:1px;background:#7A8A9C;"></div>
<div style="left:1034px;top:239px;width:1px;height:1px;background:#7A8A9C;"></div>
<div style="left:1038px;top:239px;width:1px;height:1px;background:#7A8A9C;"></div>
<div style="left:1042px;top:239px;width:1px;height:1px;background:#7A8A9C;"></div>
<div style="left:1046px;top:239px;width:1px;height:1px;background:#7A8A9C;"></div>
<div style="left:1050px;top:239px;width:1px;height:1px;background:#7A8A9C;"></div>
<div style="left:1054px;top:239px;width:1px;height:1px;background:#7A8A9C;"></div>
<div style="left:1058px;top:239px;width:1px;height:1px;background:#7A8A9C;"></div>
<div style="left:1062px;top:239px;width:1px;height:1px;background:#7A8A9C;"></div>
<div style="left:1066px;top:239px;width:1px;height:1px;background:#7A8A9C;"></div>
<div style="left:1070px;top:239px;width:1px;height:1px;background:#7A8A9C;"></div>
<div style="left:1074px;top:239px;width:1px;height:1px;background:#7A8A9C;"></div>
<div style="left:1078px;top:239px;width:1px;height:1px;background:#7A8A9C;"></div>
<div style="left:1082px;top:239px;width:1px;height:1px;background:#7A8A9C;"></div>
<div style="left:1086px;top:239px;width:1px;height:1px;background:#7A8A9C;"></div>
<div style="left:1090px;top:239px;width:1px;height:1px;background:#7A8A9C;"></div>
<div style="left:1094px;top:239px;width:1px;height:1px;background:#7A8A9C;"></div>
<div style="left:1098px;top:239px;width:1px;height:1px;background:#7A8A9C;"></div>
<div style="left:1102px;top:239px;width:1px;height:1px;background:#7A8A9C;"></div>
<div style="left:1106px;top:239px;width:1px;height:1px;background:#7A8A9C;"></div>
<div style="left:1110px;top:239px;width:1px;height:1px;background:#7A8A9C;"></div>
<div style="left:1114px;top:239px;width:1px;height:1px;background:#7A8A9C;"></div>
<div style="left:1118px;top:239px;width:1px;height:1px;background:#7A8A9C;"></div>
<div style="left:1122px;top:239px;width:1px;height:1px;background:#7A8A9C;"></div>
<div style="left:1126px;top:239px;width:1px;height:1px;background:#7A8A9C;"></div>
<div style="left:1130px;top:239px;width:1px;height:1px;background:#7A8A9C;"></div>
<div style="left:1134px;top:239px;width:1px;height:1px;background:#7A8A9C;"></div>
<div style="left:1138px;top:239px;width:1px;height:1px;background:#7A8A9C;"></div>
<div style="left:1142px;top:239px;width:1px;height:1px;background:#7A8A9C;"></div>
<svg style="position:absolute;left:11px;top:236px" width="24" height="7"><path d="M1 5L5 1L9.2 5Z" fill="#4F7ACC"/><path d="M1 5.2L5 1.2" stroke="#111" stroke-width="1"/><path d="M13 1.5L21 1.5L17 5.5Z" fill="#4F7ACC"/><path d="M13 1.5H21" stroke="#111" stroke-width="1"/></svg>
<div style="left:22px;top:239px;width:1px;height:1px;background:#7A8A9C;"></div>
<div style="left:8px;top:244px;width:518px;height:1px;background:#788898;"></div>
<div style="left:557px;top:244px;width:593px;height:1px;background:#788898;"></div>
<div style="left:8px;top:244px;width:2px;height:466px;background:#788898;"></div>
<div style="left:8px;top:234px;width:1px;height:10px;background:#fff;"></div>
<div style="left:10px;top:245px;width:514px;height:1px;background:#B0B0B0;"></div>
<div style="left:10px;top:708px;width:514px;height:1px;background:#B0B0B0;"></div>
<div style="left:10px;top:245px;width:1px;height:464px;background:#B0B0B0;"></div>
<div style="left:523px;top:245px;width:1px;height:464px;background:#B0B0B0;"></div>
<div style="left:12px;top:247px;width:510px;height:460px;background:#fff;"></div>
<div style="left:12px;top:247px;width:510px;height:1px;background:#788898;"></div>
<div style="left:12px;top:706px;width:510px;height:1px;background:#788898;"></div>
<div style="left:12px;top:247px;width:1px;height:460px;background:#788898;"></div>
<div style="left:521px;top:247px;width:1px;height:460px;background:#788898;"></div>
<div style="left:558px;top:245px;width:590px;height:1px;background:#B0B0B0;"></div>
<div style="left:558px;top:708px;width:590px;height:1px;background:#B0B0B0;"></div>
<div style="left:558px;top:245px;width:1px;height:464px;background:#B0B0B0;"></div>
<div style="left:1147px;top:245px;width:1px;height:464px;background:#B0B0B0;"></div>
<div style="left:560px;top:247px;width:586px;height:460px;background:#fff;"></div>
<div style="left:560px;top:247px;width:586px;height:1px;background:#788898;"></div>
<div style="left:560px;top:706px;width:586px;height:1px;background:#788898;"></div>
<div style="left:560px;top:247px;width:1px;height:460px;background:#788898;"></div>
<div style="left:1145px;top:247px;width:1px;height:460px;background:#788898;"></div>
<div style="left:525px;top:245px;width:32px;height:464px;background:#EEEEEE;"></div>
<div style="left:525px;top:245px;width:32px;height:1px;background:#B0B0B0;"></div>
<div style="left:525px;top:708px;width:32px;height:1px;background:#B0B0B0;"></div>
<div style="left:525px;top:245px;width:1px;height:464px;background:#B0B0B0;"></div>
<div style="left:556px;top:245px;width:1px;height:464px;background:#B0B0B0;"></div>
<div style="left:526px;top:246px;width:30px;height:1px;background:#fff;"></div>
<div style="left:526px;top:246px;width:1px;height:462px;background:#fff;"></div>
<svg style="position:absolute;left:530px;top:250px" width="23" height="455"><defs><pattern id="dp" width="4" height="4" patternUnits="userSpaceOnUse"><rect x="0" y="0" width="1" height="1" fill="#7A8A9C"/><rect x="2" y="2" width="1" height="1" fill="#7A8A9C"/></pattern></defs><rect width="23" height="455" fill="url(#dp)"/></svg>
<div style="left:550px;top:437px;width:2px;height:19px;background:#EEEEEE;"></div>
<div style="left:531px;top:437px;width:19px;height:19px;background:#fff;"></div>
<div style="left:531px;top:437px;width:19px;height:1px;background:#A9A9A9;"></div>
<div style="left:531px;top:455px;width:19px;height:1px;background:#A9A9A9;"></div>
<div style="left:531px;top:437px;width:1px;height:19px;background:#A9A9A9;"></div>
<div style="left:549px;top:437px;width:1px;height:19px;background:#A9A9A9;"></div>
<div style="left:550px;top:492px;width:2px;height:19px;background:#EEEEEE;"></div>
<div style="left:531px;top:492px;width:19px;height:19px;background:#fff;"></div>
<div style="left:531px;top:492px;width:19px;height:1px;background:#A9A9A9;"></div>
<div style="left:531px;top:510px;width:19px;height:1px;background:#A9A9A9;"></div>
<div style="left:531px;top:492px;width:1px;height:19px;background:#A9A9A9;"></div>
<div style="left:549px;top:492px;width:1px;height:19px;background:#A9A9A9;"></div>
<svg style="position:absolute;left:531px;top:437px" width="19" height="19"><path d="M2 6.2H9.3V2.8L18.4 9.9L9.3 17V13.7H2Z" fill="#979797"/></svg>
<svg style="position:absolute;left:531px;top:492px" width="19" height="19"><path d="M18 6.2H10V2.8L1.6 9.8L10 16.8V13.7H18Z" fill="#979797"/></svg>
<div style="left:13px;top:248px;width:508px;height:20px;background:#C44E2E;"></div>
<div style="left:92px;top:248px;width:1px;height:20px;background:#FF6A3A;"></div>
<div style="left:13px;top:248px;width:79px;height:1px;background:#86311A;"></div>
<div style="left:13px;top:266px;width:79px;height:1px;background:#86311A;"></div>
<div style="left:13px;top:248px;width:1px;height:19px;background:#86311A;"></div>
<div style="left:91px;top:248px;width:1px;height:19px;background:#86311A;"></div>
<div style="left:14px;top:249px;width:77px;height:1px;background:#FF6A3A;"></div>
<div style="left:14px;top:249px;width:1px;height:17px;background:#FF6A3A;"></div>
<div class="t" style="left:36px;top:252px;font-size:12px;line-height:14px;color:#fff;font-weight:normal;"><i style="width:8px">S</i><i style="width:3px">t</i><i style="width:7px">a</i><i style="width:3px">t</i><i style="width:7px">u</i><i style="width:6px">s</i></div>
<div style="left:216px;top:248px;width:1px;height:20px;background:#FF6A3A;"></div>
<div style="left:93px;top:248px;width:123px;height:1px;background:#86311A;"></div>
<div style="left:93px;top:266px;width:123px;height:1px;background:#86311A;"></div>
<div style="left:93px;top:248px;width:1px;height:19px;background:#86311A;"></div>
<div style="left:215px;top:248px;width:1px;height:19px;background:#86311A;"></div>
<div style="left:94px;top:249px;width:121px;height:1px;background:#FF6A3A;"></div>
<div style="left:94px;top:249px;width:1px;height:17px;background:#FF6A3A;"></div>
<div class="t" style="left:126px;top:252px;font-size:12px;line-height:14px;color:#fff;font-weight:normal;"><i style="width:8px">P</i><i style="width:4px">r</i><i style="width:7px">o</i><i style="width:7px">d</i><i style="width:7px">u</i><i style="width:6px">c</i><i style="width:3px">t</i><i style="width:3px">&nbsp;</i><i style="width:3px">I</i><i style="width:9px">D</i></div>
<div style="left:363px;top:248px;width:1px;height:20px;background:#FF6A3A;"></div>
<div style="left:217px;top:248px;width:146px;height:1px;background:#86311A;"></div>
<div style="left:217px;top:266px;width:146px;height:1px;background:#86311A;"></div>
<div style="left:217px;top:248px;width:1px;height:19px;background:#86311A;"></div>
<div style="left:362px;top:248px;width:1px;height:19px;background:#86311A;"></div>
<div style="left:218px;top:249px;width:144px;height:1px;background:#FF6A3A;"></div>
<div style="left:218px;top:249px;width:1px;height:17px;background:#FF6A3A;"></div>
<div class="t" style="left:259px;top:252px;font-size:12px;line-height:14px;color:#fff;font-weight:normal;"><i style="width:9px">D</i><i style="width:7px">e</i><i style="width:6px">s</i><i style="width:6px">c</i><i style="width:4px">r</i><i style="width:3px">i</i><i style="width:7px">p</i><i style="width:3px">t</i><i style="width:3px">i</i><i style="width:7px">o</i><i style="width:7px">n</i></div>
<div style="left:398px;top:248px;width:1px;height:20px;background:#FF6A3A;"></div>
<div style="left:364px;top:248px;width:34px;height:1px;background:#86311A;"></div>
<div style="left:364px;top:266px;width:34px;height:1px;background:#86311A;"></div>
<div style="left:364px;top:248px;width:1px;height:19px;background:#86311A;"></div>
<div style="left:397px;top:248px;width:1px;height:19px;background:#86311A;"></div>
<div style="left:365px;top:249px;width:32px;height:1px;background:#FF6A3A;"></div>
<div style="left:365px;top:249px;width:1px;height:17px;background:#FF6A3A;"></div>
<div class="t" style="left:372px;top:252px;font-size:12px;line-height:14px;color:#fff;font-weight:normal;"><i style="width:9px">Q</i><i style="width:3px">t</i><i style="width:6px">y</i></div>
<div style="left:486px;top:248px;width:1px;height:20px;background:#FF6A3A;"></div>
<div style="left:399px;top:248px;width:87px;height:1px;background:#86311A;"></div>
<div style="left:399px;top:266px;width:87px;height:1px;background:#86311A;"></div>
<div style="left:399px;top:248px;width:1px;height:19px;background:#86311A;"></div>
<div style="left:485px;top:248px;width:1px;height:19px;background:#86311A;"></div>
<div style="left:400px;top:249px;width:85px;height:1px;background:#FF6A3A;"></div>
<div style="left:400px;top:249px;width:1px;height:17px;background:#FF6A3A;"></div>
<div class="t" style="left:419px;top:252px;font-size:12px;line-height:14px;color:#fff;font-weight:normal;"><i style="width:9px">D</i><i style="width:7px">u</i><i style="width:4px">r</i><i style="width:7px">a</i><i style="width:3px">t</i><i style="width:3px">i</i><i style="width:7px">o</i><i style="width:7px">n</i></div>
<div style="left:13px;top:267px;width:474px;height:1px;background:#FF6A3A;"></div>
<div style="left:487px;top:248px;width:34px;height:20px;background:#C44E2E;"></div>
<div style="left:13px;top:286px;width:474px;height:1px;background:#B8682F;"></div>
<div style="left:13px;top:305px;width:474px;height:1px;background:#B8682F;"></div>
<div style="left:13px;top:324px;width:474px;height:1px;background:#B8682F;"></div>
<div style="left:92px;top:268px;width:1px;height:57px;background:#B8682F;"></div>
<div style="left:216px;top:268px;width:1px;height:57px;background:#B8682F;"></div>
<div style="left:363px;top:268px;width:1px;height:57px;background:#B8682F;"></div>
<div style="left:398px;top:268px;width:1px;height:57px;background:#B8682F;"></div>
<div style="left:486px;top:268px;width:1px;height:57px;background:#B8682F;"></div>
<div class="t " style="left:14px;top:271px;font-size:12px;line-height:14px;color:#222;font-weight:normal;"><i style="width:10px">M</i><i style="width:7px">o</i><i style="width:7px">d</i><i style="width:3px">i</i><i style="width:3px">f</i><i style="width:3px">i</i><i style="width:7px">e</i><i style="width:7px">d</i></div>
<div class="t " style="left:94px;top:271px;font-size:12px;line-height:14px;color:#222;font-weight:normal;"><i style="width:8px">B</i><i style="width:7px">L</i><i style="width:9px">O</i><i style="width:9px">C</i><i style="width:8px">K</i><i style="width:3px">&nbsp;</i><i style="width:8px">P</i><i style="width:7px">L</i><i style="width:8px">A</i><i style="width:9px">N</i><i style="width:9px">N</i><i style="width:8px">E</i><i style="width:9px">R</i></div>
<div class="t " style="left:218px;top:271px;font-size:12px;line-height:14px;color:#222;font-weight:normal;"><i style="width:8px">B</i><i style="width:7px">L</i><i style="width:9px">O</i><i style="width:9px">C</i><i style="width:8px">K</i><i style="width:3px">&nbsp;</i><i style="width:8px">P</i><i style="width:7px">L</i><i style="width:8px">A</i><i style="width:9px">N</i><i style="width:9px">N</i><i style="width:8px">E</i><i style="width:9px">R</i></div>
<div class="t" style="left:390px;top:271px;font-size:12px;line-height:14px;color:#222;"><i style="width:7px">1</i></div>
<div class="t" style="left:461px;top:271px;font-size:12px;line-height:14px;color:#222;"><i style="width:7px">2</i><i style="width:3px">.</i><i style="width:7px">0</i><i style="width:7px">0</i></div>
<div class="t " style="left:14px;top:309px;font-size:12px;line-height:14px;color:#222;font-weight:normal;"><i style="width:8px">A</i><i style="width:7px">d</i><i style="width:7px">d</i><i style="width:7px">e</i><i style="width:7px">d</i></div>
<div style="left:561px;top:248px;width:584px;height:20px;background:#C44E2E;"></div>
<div style="left:660px;top:248px;width:1px;height:20px;background:#FF6A3A;"></div>
<div style="left:561px;top:248px;width:99px;height:1px;background:#86311A;"></div>
<div style="left:561px;top:266px;width:99px;height:1px;background:#86311A;"></div>
<div style="left:561px;top:248px;width:1px;height:19px;background:#86311A;"></div>
<div style="left:659px;top:248px;width:1px;height:19px;background:#86311A;"></div>
<div style="left:562px;top:249px;width:97px;height:1px;background:#FF6A3A;"></div>
<div style="left:562px;top:249px;width:1px;height:17px;background:#FF6A3A;"></div>
<div class="t" style="left:575px;top:252px;font-size:12px;line-height:14px;color:#fff;font-weight:normal;"><i style="width:9px">O</i><i style="width:7px">p</i><i style="width:6px">s</i><i style="width:3px">&nbsp;</i><i style="width:9px">O</i><i style="width:4px">r</i><i style="width:7px">d</i><i style="width:7px">e</i><i style="width:4px">r</i><i style="width:3px">&nbsp;</i><i style="width:3px">I</i><i style="width:9px">D</i></div>
<div style="left:767px;top:248px;width:1px;height:20px;background:#FF6A3A;"></div>
<div style="left:661px;top:248px;width:106px;height:1px;background:#86311A;"></div>
<div style="left:661px;top:266px;width:106px;height:1px;background:#86311A;"></div>
<div style="left:661px;top:248px;width:1px;height:19px;background:#86311A;"></div>
<div style="left:766px;top:248px;width:1px;height:19px;background:#86311A;"></div>
<div style="left:662px;top:249px;width:104px;height:1px;background:#FF6A3A;"></div>
<div style="left:662px;top:249px;width:1px;height:17px;background:#FF6A3A;"></div>
<div class="t" style="left:686px;top:252px;font-size:12px;line-height:14px;color:#fff;font-weight:normal;"><i style="width:8px">P</i><i style="width:4px">r</i><i style="width:7px">o</i><i style="width:7px">d</i><i style="width:7px">u</i><i style="width:6px">c</i><i style="width:3px">t</i><i style="width:3px">&nbsp;</i><i style="width:3px">I</i><i style="width:9px">D</i></div>
<div style="left:917px;top:248px;width:1px;height:20px;background:#FF6A3A;"></div>
<div style="left:768px;top:248px;width:149px;height:1px;background:#86311A;"></div>
<div style="left:768px;top:266px;width:149px;height:1px;background:#86311A;"></div>
<div style="left:768px;top:248px;width:1px;height:19px;background:#86311A;"></div>
<div style="left:916px;top:248px;width:1px;height:19px;background:#86311A;"></div>
<div style="left:769px;top:249px;width:147px;height:1px;background:#FF6A3A;"></div>
<div style="left:769px;top:249px;width:1px;height:17px;background:#FF6A3A;"></div>
<div class="t" style="left:812px;top:252px;font-size:12px;line-height:14px;color:#fff;font-weight:normal;"><i style="width:9px">D</i><i style="width:7px">e</i><i style="width:6px">s</i><i style="width:6px">c</i><i style="width:4px">r</i><i style="width:3px">i</i><i style="width:7px">p</i><i style="width:3px">t</i><i style="width:3px">i</i><i style="width:7px">o</i><i style="width:7px">n</i></div>
<div style="left:952px;top:248px;width:1px;height:20px;background:#FF6A3A;"></div>
<div style="left:918px;top:248px;width:34px;height:1px;background:#86311A;"></div>
<div style="left:918px;top:266px;width:34px;height:1px;background:#86311A;"></div>
<div style="left:918px;top:248px;width:1px;height:19px;background:#86311A;"></div>
<div style="left:951px;top:248px;width:1px;height:19px;background:#86311A;"></div>
<div style="left:919px;top:249px;width:32px;height:1px;background:#FF6A3A;"></div>
<div style="left:919px;top:249px;width:1px;height:17px;background:#FF6A3A;"></div>
<div class="t" style="left:926px;top:252px;font-size:12px;line-height:14px;color:#fff;font-weight:normal;"><i style="width:9px">Q</i><i style="width:3px">t</i><i style="width:6px">y</i></div>
<div style="left:1012px;top:248px;width:1px;height:20px;background:#FF6A3A;"></div>
<div style="left:953px;top:248px;width:59px;height:1px;background:#86311A;"></div>
<div style="left:953px;top:266px;width:59px;height:1px;background:#86311A;"></div>
<div style="left:953px;top:248px;width:1px;height:19px;background:#86311A;"></div>
<div style="left:1011px;top:248px;width:1px;height:19px;background:#86311A;"></div>
<div style="left:954px;top:249px;width:57px;height:1px;background:#FF6A3A;"></div>
<div style="left:954px;top:249px;width:1px;height:17px;background:#FF6A3A;"></div>
<div class="t" style="left:959px;top:252px;font-size:12px;line-height:14px;color:#fff;font-weight:normal;"><i style="width:9px">D</i><i style="width:7px">u</i><i style="width:4px">r</i><i style="width:7px">a</i><i style="width:3px">t</i><i style="width:3px">i</i><i style="width:7px">o</i><i style="width:7px">n</i></div>
<div style="left:561px;top:267px;width:452px;height:1px;background:#FF6A3A;"></div>
<div style="left:1013px;top:248px;width:132px;height:20px;background:#C44E2E;"></div>
<div style="left:561px;top:286px;width:452px;height:1px;background:#B8682F;"></div>
<div style="left:561px;top:305px;width:452px;height:1px;background:#B8682F;"></div>
<div style="left:561px;top:324px;width:452px;height:1px;background:#B8682F;"></div>
<div style="left:660px;top:268px;width:1px;height:57px;background:#B8682F;"></div>
<div style="left:767px;top:268px;width:1px;height:57px;background:#B8682F;"></div>
<div style="left:917px;top:268px;width:1px;height:57px;background:#B8682F;"></div>
<div style="left:952px;top:268px;width:1px;height:57px;background:#B8682F;"></div>
<div style="left:1012px;top:268px;width:1px;height:57px;background:#B8682F;"></div>
<div class="t " style="left:562px;top:271px;font-size:12px;line-height:14px;color:#222;font-weight:normal;"><i style="width:9px">O</i><i style="width:9px">R</i><i style="width:9px">D</i><i style="width:4px">-</i><i style="width:7px">8</i><i style="width:7px">4</i><i style="width:3px">.</i><i style="width:7px">0</i><i style="width:7px">1</i></div>
<div class="t " style="left:662px;top:271px;font-size:12px;line-height:14px;color:#222;font-weight:normal;"><i style="width:8px">B</i><i style="width:7px">L</i><i style="width:9px">O</i><i style="width:9px">C</i><i style="width:8px">K</i><i style="width:3px">&nbsp;</i><i style="width:8px">P</i><i style="width:7px">L</i><i style="width:8px">A</i><i style="width:9px">N</i><i style="width:9px">N</i><i style="width:8px">E</i><i style="width:9px">R</i></div>
<div class="t " style="left:769px;top:271px;font-size:12px;line-height:14px;color:#222;font-weight:normal;"><i style="width:8px">B</i><i style="width:7px">L</i><i style="width:9px">O</i><i style="width:9px">C</i><i style="width:8px">K</i><i style="width:3px">&nbsp;</i><i style="width:8px">P</i><i style="width:7px">L</i><i style="width:8px">A</i><i style="width:9px">N</i><i style="width:9px">N</i><i style="width:8px">E</i><i style="width:9px">R</i></div>
<div class="t" style="left:944px;top:271px;font-size:12px;line-height:14px;color:#222;"><i style="width:7px">4</i></div>
<div class="t" style="left:987px;top:271px;font-size:12px;line-height:14px;color:#222;"><i style="width:7px">2</i><i style="width:3px">.</i><i style="width:7px">0</i><i style="width:7px">0</i></div>
<div class="t " style="left:562px;top:309px;font-size:12px;line-height:14px;color:#222;font-weight:normal;"><i style="width:9px">O</i><i style="width:9px">R</i><i style="width:9px">D</i><i style="width:4px">-</i><i style="width:7px">8</i><i style="width:7px">4</i><i style="width:3px">.</i><i style="width:7px">0</i><i style="width:7px">1</i></div>
<div class="t " style="left:662px;top:309px;font-size:12px;line-height:14px;color:#222;font-weight:normal;"><i style="width:8px">B</i><i style="width:9px">R</i><i style="width:3px">I</i><i style="width:9px">C</i><i style="width:8px">K</i><i style="width:3px">&nbsp;</i><i style="width:8px">S</i><i style="width:8px">A</i><i style="width:11px">W</i></div>
<div class="t " style="left:769px;top:309px;font-size:12px;line-height:14px;color:#222;font-weight:normal;"><i style="width:8px">B</i><i style="width:9px">R</i><i style="width:3px">I</i><i style="width:9px">C</i><i style="width:8px">K</i><i style="width:3px">&nbsp;</i><i style="width:8px">S</i><i style="width:8px">A</i><i style="width:11px">W</i></div>
<div class="t" style="left:944px;top:309px;font-size:12px;line-height:14px;color:#222;"><i style="width:7px">2</i></div>
<div class="t" style="left:987px;top:309px;font-size:12px;line-height:14px;color:#222;"><i style="width:7px">2</i><i style="width:3px">.</i><i style="width:7px">0</i><i style="width:7px">0</i></div>
<svg style="left:17px;top:35px" width="29" height="29" viewBox="0 0 29 29">
<defs>
<linearGradient id="gA" x1="0" y1="0" x2="1" y2="1"><stop offset="0" stop-color="#86EC7C"/><stop offset="0.45" stop-color="#3ACB36"/><stop offset="1" stop-color="#109C10"/></linearGradient>
<linearGradient id="gB" x1="0" y1="0" x2="1" y2="1"><stop offset="0" stop-color="#92F088"/><stop offset="0.45" stop-color="#42CE3E"/><stop offset="1" stop-color="#12A012"/></linearGradient>
</defs>
<path d="M6.3 13.5C7 9.6 10.4 6.6 16.1 6.5L16.1 2.9L25.3 8.5L16.1 14.1L16.1 9.8C11.8 9.6 8.8 10.9 6.3 13.5Z" fill="url(#gA)" stroke="#0C8A0C" stroke-width="0.6" stroke-linejoin="round"/>
<path d="M23.6 14.8C22.8 19 19.2 21.9 13.7 22L13.7 25.2L5 19.8L13.7 14.2L13.7 18.4C18.2 18.4 21.2 17.6 23.6 14.8Z" fill="url(#gB)" stroke="#0C8A0C" stroke-width="0.6" stroke-linejoin="round"/>
</svg>
<svg style="left:47px;top:35px" width="29" height="29" viewBox="0 0 29 29">
<defs>
<linearGradient id="gDoc" x1="0" y1="0" x2="1" y2="1"><stop offset="0" stop-color="#ffffff"/><stop offset="0.6" stop-color="#F2F2F2"/><stop offset="1" stop-color="#D6D6D6"/></linearGradient>
<linearGradient id="gLock" x1="0" y1="0" x2="0" y2="1"><stop offset="0" stop-color="#DD5A60"/><stop offset="1" stop-color="#C8434A"/></linearGradient>
<linearGradient id="gPen" x1="0" y1="0" x2="0" y2="1"><stop offset="0" stop-color="#F9C98A"/><stop offset="0.5" stop-color="#EE9A4A"/><stop offset="1" stop-color="#C86A28"/></linearGradient>
</defs>
<path d="M7.5 4.5H21.5L25.5 8.5V26.5H7.5Z" fill="url(#gDoc)" stroke="#8C8C8C" stroke-width="1"/>
<path d="M21.5 4.5V8.5H25.5" fill="#F4F4F4" stroke="#A0A0A0" stroke-width="0.8"/>
<path d="M13 9.5H18.5M13 12.5H18.5M10.5 21.5H14.5" stroke="#C4C4C4" stroke-width="1"/>
<path d="M6.3 10.2V6.6C6.3 4.5 7.3 3.4 8.7 3.4C10.1 3.4 11.2 4.5 11.2 6.6V10.2" fill="none" stroke="#ADADAD" stroke-width="2.2"/>
<path d="M6.3 10V6.6C6.3 4.5 7.3 3.4 8.7 3.4C10.1 3.4 11.2 4.5 11.2 6.6V10" fill="none" stroke="#E6E6E6" stroke-width="0.7"/>
<rect x="3" y="10" width="12" height="8.8" fill="url(#gLock)"/>
<path d="M3 11.5H15M3 14H15M3 16.5H15" stroke="#EC9A9C" stroke-width="0.6" stroke-dasharray="1 1" opacity="0.45"/>
<path d="M3 18.5H15" stroke="#B8353C" stroke-width="0.8"/>
<g transform="translate(20.2 15.4) rotate(-45)">
<rect x="-5.6" y="-2.1" width="9.6" height="4.2" fill="url(#gPen)" stroke="#B8641F" stroke-width="0.5"/>
<rect x="4" y="-2.1" width="1.8" height="4.2" fill="#A6DDF5"/>
<rect x="5.8" y="-2.3" width="2.6" height="4.6" rx="1" fill="#E41A1A"/>
<path d="M-5.6 -2.1L-8.6 0L-5.6 2.1Z" fill="#5A4A2A"/>
<path d="M-7.2 -1L-8.8 0L-7.2 1Z" fill="#111"/>
</g>
</svg>
<svg style="left:77px;top:35px" width="29" height="29" viewBox="0 0 29 29">
<path d="M4 14.9L8.7 10.1L13.6 15L23.2 7.3L26.7 11L13.9 24.6Z" fill="#9B9B9B" stroke="#8A8A8A" stroke-width="0.6" stroke-linejoin="round"/>
</svg>
<svg style="left:1111px;top:35px" width="29" height="29" viewBox="0 0 29 29">
<defs>
<linearGradient id="gExit" x1="0" y1="0" x2="1" y2="1"><stop offset="0" stop-color="#E88080"/><stop offset="0.45" stop-color="#FF4A12"/><stop offset="1" stop-color="#FF9A35"/></linearGradient>
</defs>
<path d="M5.5 4.5H24.5L25.5 5.5V24.5L24.5 25.5H5.5L4.5 24.5V5.5Z" fill="url(#gExit)" stroke="#9E1010" stroke-width="1"/>
<path d="M6.5 12V19M6 12.5H10.2M6 15.5H9.6M6 18.5H10.2M11.2 12.2L16.3 18.8M16.3 12.2L11.2 18.8M18.5 12V19M20 12.5H25M22.5 12V19" stroke="#fff" stroke-width="1" fill="none"/>
</svg>

</body></html>
